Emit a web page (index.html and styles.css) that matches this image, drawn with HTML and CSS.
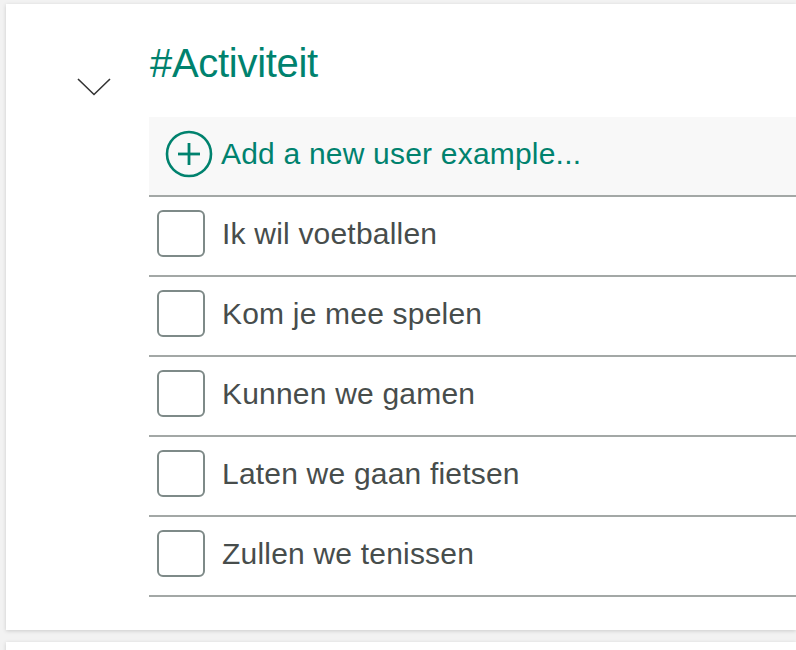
FILE: index.html
```html
<!DOCTYPE html>
<html lang="nl">
<head>
<meta charset="utf-8">
<title>Activiteit</title>
<link rel="stylesheet" href="styles.css">
</head>
<body>
<div class="page">
  <section class="card">
    <div class="toggle">
      <svg class="chevron" width="34" height="18" viewBox="0 0 34 18" aria-hidden="true">
        <polyline points="1,1 17,16.5 33,1" fill="none" stroke="#333" stroke-width="1.6"/>
      </svg>
    </div>
    <div class="content">
      <h2 class="title">#Activiteit</h2>
      <ul class="list">
        <li class="row add-row">
          <svg class="plus" width="48" height="48" viewBox="0 0 48 48" aria-hidden="true">
            <circle cx="24" cy="24" r="22" fill="none" stroke="#00826e" stroke-width="2.6"/>
            <line x1="13" y1="24" x2="35" y2="24" stroke="#00826e" stroke-width="2.8"/>
            <line x1="24" y1="13" x2="24" y2="35" stroke="#00826e" stroke-width="2.8"/>
          </svg>
          <span class="add-text">Add a new user example...</span>
        </li>
        <li class="row item"><span class="box"></span><span class="label">Ik wil voetballen</span></li>
        <li class="row item"><span class="box"></span><span class="label">Kom je mee spelen</span></li>
        <li class="row item"><span class="box"></span><span class="label">Kunnen we gamen</span></li>
        <li class="row item"><span class="box"></span><span class="label">Laten we gaan fietsen</span></li>
        <li class="row item"><span class="box"></span><span class="label">Zullen we tenissen</span></li>
      </ul>
    </div>
  </section>
  <section class="card next"></section>
</div>
</body>
</html>
```

FILE: styles.css
```css
html, body {
  margin: 0;
  padding: 0;
  overflow: hidden;
}
body {
  background: #f2f2f2;
  font-family: "Liberation Sans", Arial, sans-serif;
}
.page {
  width: 100vw;
  height: 100vh;
  overflow: hidden;
  box-sizing: border-box;
  padding: 4px 0 0 6px;
  display: flex;
  flex-direction: column;
  gap: 12px;
}
.card {
  background: #fff;
  box-shadow: 0 1px 4px rgba(0, 0, 0, 0.16);
  display: flex;
  height: 626px;
  flex: none;
  box-sizing: border-box;
}
.card.next {
  height: 40px;
}
.toggle {
  width: 143px;
  flex: none;
  padding: 74px 0 0 71px;
  box-sizing: border-box;
}
.chevron { display: block; }
.content {
  flex: 1;
  padding-top: 35px;
}
.title {
  margin: 0 0 30px 1px;
  font-size: 40px;
  line-height: 48px;
  font-weight: normal;
  color: #00826e;
  letter-spacing: -0.3px;
}
.list {
  list-style: none;
  margin: 0;
  padding: 0;
}
.row {
  height: 80px;
  box-sizing: border-box;
  border-bottom: 2px solid #a3a8a6;
  display: flex;
  align-items: center;
}
.add-row {
  background: #f8f8f8;
  padding: 0 0 4px 16px;
}
.plus {
  display: block;
  flex: none;
  margin-right: 8px;
}
.add-text {
  font-size: 30px;
  color: #00826e;
  letter-spacing: 0.2px;
}
.item {
  padding: 0 0 5px 8px;
}
.box {
  width: 48px;
  height: 47px;
  box-sizing: border-box;
  border: 2px solid #7e8a88;
  border-radius: 6px;
  flex: none;
  margin-right: 17px;
}
.label {
  font-size: 30px;
  color: #474d4c;
  letter-spacing: 0.2px;
}
```
